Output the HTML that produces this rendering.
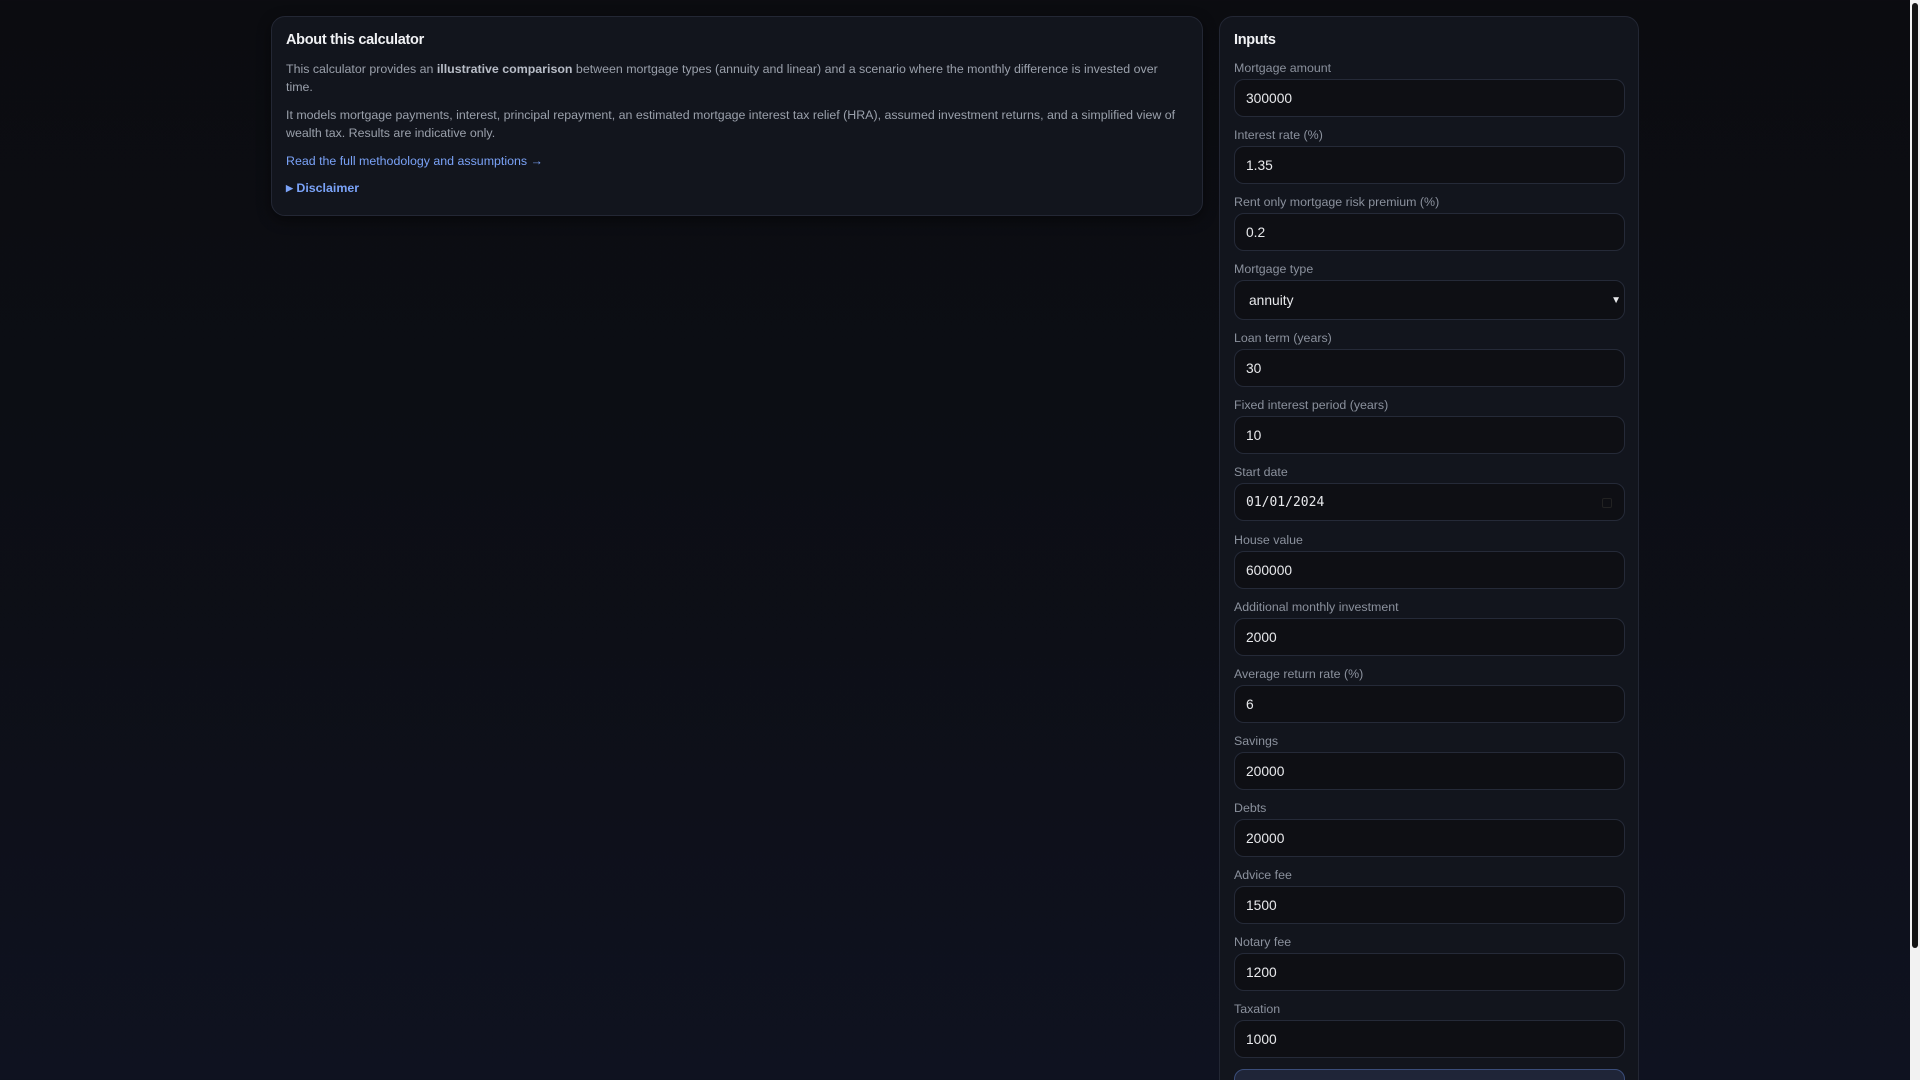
<!DOCTYPE html>
<html><head><meta charset="utf-8"><style>
*{box-sizing:border-box;margin:0;padding:0}
html,body{width:1920px;height:1080px;overflow:hidden}
body{background:linear-gradient(180deg,#0b0c10 0%,#0d0f17 60%,#0f1220 100%);font-family:"Liberation Sans",sans-serif;color:#e5e7eb;position:relative}
.card{position:absolute;background:#12151d;border:1px solid #232734;border-radius:14px}
#about{left:271px;top:16px;width:932px;height:200px;box-shadow:0 4px 14px rgba(0,0,0,.45)}
#inputs{left:1219px;top:16px;width:420px;height:1100px}
h2{position:absolute;font-size:14.5px;font-weight:bold;color:#f1f2f5;letter-spacing:-.3px}
.p{position:absolute;left:14px;width:890px;font-size:12.4px;line-height:18px;color:#9aa0ab}
.p b{color:#b8bdc7}
.link{position:absolute;left:14px;font-size:12.4px;color:#7aa2f7}
.lbl{position:absolute;left:14px;font-size:12.4px;line-height:16px;color:#8b919d}
.in{position:absolute;left:14px;width:391px;height:38px;background:#0e0f14;border:1px solid #252a38;border-radius:10px;font-size:13.8px;color:#e8e9ec;padding-left:11px;line-height:38px}
#sb{position:absolute;left:1910px;top:0;width:10px;height:1080px;background:#f2f2f2}
#th{position:absolute;left:1912px;top:3px;width:6px;height:945px;background:#141414;border-radius:3px}
</style></head><body>
<div class="card" id="about">
<h2 style="left:14px;top:15px">About this calculator</h2>
<div class="p" style="top:43px">This calculator provides an <b>illustrative comparison</b> between mortgage types (annuity and linear) and a scenario where the monthly difference is invested over time.</div>
<div class="p" style="top:89px">It models mortgage payments, interest, principal repayment, an estimated mortgage interest tax relief (HRA), assumed investment returns, and a simplified view of wealth tax. Results are indicative only.</div>
<div class="link" style="top:137px">Read the full methodology and assumptions →</div>
<div class="link" style="top:164px;font-weight:bold"><span style="font-size:9px;position:relative;top:-1px">▶</span> Disclaimer</div>
</div>
<div class="card" id="inputs">
<h2 style="left:14px;top:15px">Inputs</h2>
<div class="lbl" style="top:43px">Mortgage amount</div><div class="in" style="top:62px">300000</div>
<div class="lbl" style="top:110px">Interest rate (%)</div><div class="in" style="top:129px">1.35</div>
<div class="lbl" style="top:177px">Rent only mortgage risk premium (%)</div><div class="in" style="top:196px">0.2</div>
<div class="lbl" style="top:244px">Mortgage type</div><div class="in" style="top:263px;height:40px;line-height:40px;padding-left:14px">annuity<span style="position:absolute;right:3px;top:0;font-size:10px">▼</span></div>
<div class="lbl" style="top:313px">Loan term (years)</div><div class="in" style="top:332px">30</div>
<div class="lbl" style="top:380px">Fixed interest period (years)</div><div class="in" style="top:399px">10</div>
<div class="lbl" style="top:447px">Start date</div><div class="in" style="top:466px;font-family:'DejaVu Sans Mono','Liberation Mono',monospace;font-size:13px">01/01/2024<span style="position:absolute;right:12px;top:14px;width:10px;height:10px;border:1.5px solid #222;border-radius:2px"></span></div>
<div class="lbl" style="top:515px">House value</div><div class="in" style="top:534px">600000</div>
<div class="lbl" style="top:582px">Additional monthly investment</div><div class="in" style="top:601px">2000</div>
<div class="lbl" style="top:649px">Average return rate (%)</div><div class="in" style="top:668px">6</div>
<div class="lbl" style="top:716px">Savings</div><div class="in" style="top:735px">20000</div>
<div class="lbl" style="top:783px">Debts</div><div class="in" style="top:802px">20000</div>
<div class="lbl" style="top:850px">Advice fee</div><div class="in" style="top:869px">1500</div>
<div class="lbl" style="top:917px">Notary fee</div><div class="in" style="top:936px">1200</div>
<div class="lbl" style="top:984px">Taxation</div><div class="in" style="top:1003px">1000</div>
<div class="in" style="top:1052px;background:#1f2538;border-color:#3a4d7a"></div>
</div>
<div id="sb"></div><div id="th"></div>
</body></html>
